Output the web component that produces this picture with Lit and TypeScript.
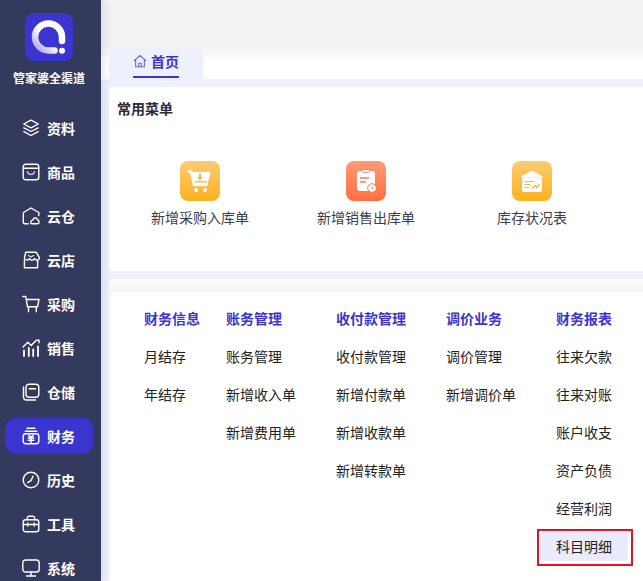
import { LitElement, html, css, svg } from "lit";
import { customElement } from "lit/decorators.js";

const navIcons: Record<string, unknown> = {
  资料: svg`<path d="M9 1.200 16.300 5 9 8.800 1.700 5Z"/><path d="M1.900 8.800 9 12.500l7.100-3.700"/><path d="M1.900 12.600 9 16.500l7.100-3.900"/>`,
  商品: svg`<rect x="1.200" y="1.200" width="15.600" height="15.600" rx="2.500"/><path d="M1.500 5.200h15"/><path d="M5.500 8.800c.7 3.400 6.300 3.400 7 0" stroke="#e0b8ec"/>`,
  云仓: svg`<path d="M16.800 8.500V5.500L9 1 1.400 5.500l-.2 9.200c0 1.300.7 2.100 2 2.100h3"/><path d="M9.500 16.800h5.800c2.400-.2 2.400-3.600.2-3.900-.6-2.700-4.300-2.400-4.700.2-2.100-.2-2.700 3.500-1.300 3.700Z"/>`,
  云店: svg`<path d="M3.800 1.200h10.400l3.300 5.600c-.4 3-4 3-4.900.8-.8 2.200-4.500 2.200-5.200 0-.9 2.200-4.500 2.200-5-.8Z"/><path d="M2.400 9.500v7.300h13.200V9.500"/><path d="M6.500 4.500 9 6l2.500-1.500" stroke="#cfd3ea"/>`,
  采购: svg`<path d="M.8 1.500h3l1.700 10.300h10L17 4.500H4.300"/><path d="M6.500 11.800v5M14.300 11.800v5"/>`,
  销售: svg`<path d="M1 8 5.800 3.200l3.400 3.300L14 1.500"/><path d="M14.500 1.200h2.500v2.500"/><path d="M2 11.500v5.500M6.800 9v8M11.200 10.500v6.500M16 7.500v9.500" stroke-width="1.800"/>`,
  仓储: svg`<path d="M1.500 4v10c0 1.800 1.200 3 3 3h9"/><rect x="4" y="1.200" width="12.800" height="13" rx="3"/><path d="M7.300 5.800h6.200"/>`,
  财务: svg`<path d="M5 1.300h8M3.300 4.200h11.400"/><rect x="1.200" y="6.800" width="15.600" height="10" rx="2.500"/><path d="M6.800 8.300 9 10.400l2.200-2.100M6.300 11h5.400M6.300 13.200h5.400M9 10.500v4.800" stroke-width="1.600"/>`,
  历史: svg`<circle cx="9" cy="9" r="7.800"/><path d="M11 5.200 9 9.600l-3.400 2"/>`,
  工具: svg`<path d="M5.300 4.800V3c0-1 .7-1.800 1.700-1.800h4c1 0 1.700.8 1.700 1.800v1.800"/><rect x="1.200" y="4.800" width="15.600" height="12" rx="2.500"/><path d="M1.500 9.500h15M5.800 8v3M12.200 8v3"/>`,
  系统: svg`<rect x=".8" y="1" width="16.400" height="12" rx="2.800"/><path d="M9 13v4M4.500 17h9"/>`,
};

const navItems = ["资料", "商品", "云仓", "云店", "采购", "销售", "仓储", "财务", "历史", "工具", "系统"];

const columns = [
  { title: "财务信息", items: ["月结存", "年结存"] },
  { title: "账务管理", items: ["账务管理", "新增收入单", "新增费用单"] },
  { title: "收付款管理", items: ["收付款管理", "新增付款单", "新增收款单", "新增转款单"] },
  { title: "调价业务", items: ["调价管理", "新增调价单"] },
  { title: "财务报表", items: ["往来欠款", "往来对账", "账户收支", "资产负债", "经营利润", "科目明细"] },
];

const cartIcon = svg`
  <path d="M8.500 10.500h2.500l3 13.500h12.500" fill="none" stroke="#fff" stroke-width="2.400" stroke-linejoin="round" stroke-linecap="round"/>
  <path d="M11.500 11h19l-3 13H14Z" fill="#fff"/>
  <path d="M20 12.500v4.500" stroke="#fbb62f" stroke-width="1.800"/>
  <path d="M17 16h6l-3 3.200Z" fill="#fbb62f"/>
  <path d="M15 20.800h12" stroke="#fbb62f" stroke-width="1.200"/>
  <circle cx="16" cy="29" r="2" fill="#fff"/><circle cx="25" cy="29" r="2" fill="#fff"/>`;

const clipIcon = svg`
  <rect x="11" y="10" width="18" height="20" rx="2.500" fill="#fff"/>
  <rect x="16" y="8.500" width="8" height="3" rx="1.500" fill="#fff" stroke="#ff7a50" stroke-width=".8"/>
  <path d="M14 17h9M14 21h6" stroke="#ff7a50" stroke-width="1.400"/>
  <circle cx="26" cy="27" r="4.300" fill="#fff" stroke="#ff7a50" stroke-width="1"/>
  <path d="M26 25v2.200l1.600 1" fill="none" stroke="#ff7a50" stroke-width=".9"/>`;

const reportIcon = svg`
  <path d="M20 10.500 10 16h20Z" fill="#fff" stroke="#fff" stroke-width="1.500" stroke-linejoin="round"/>
  <rect x="10" y="17" width="20" height="14" rx="2" fill="#fff"/>
  <path d="M12.500 20.500h10M12.500 23.500h6M12.500 26.500h4.500" stroke="#fbb62f" stroke-width="1.100"/>
  <path d="M20 27.500l3-3 1.500 2 3-3.500" fill="none" stroke="#fbb62f" stroke-width="1.200"/>`;

const quick = [
  { label: "新增采购入库单", tone: "amber", icon: cartIcon },
  { label: "新增销售出库单", tone: "coral", icon: clipIcon },
  { label: "库存状况表", tone: "amber", icon: reportIcon },
];

@customElement("app-root")
export class AppRoot extends LitElement {
  static styles = css`
    :host {
      display: flex;
      width: 643px;
      height: 581px;
      overflow: hidden;
      position: relative;
      font-family: "Noto Sans CJK SC", "Liberation Sans", sans-serif;
      background: #eef0fc;
    }

    .side {
      flex: 0 0 101px;
      background: #343a5e;
      display: flex;
      flex-direction: column;
      align-items: center;
      padding: 13px 3px 0 0;
      box-sizing: border-box;
      box-shadow: 3px 0 8px rgba(52, 58, 94, 0.12);
      z-index: 1;
    }
    .logo {
      width: 48px;
      height: 48px;
      border-radius: 9px;
      background: #3b35cf;
      display: block;
      flex: none;
    }
    .brand {
      margin: 8px 0 23px;
      color: #fff;
      font-size: 12px;
      font-weight: 700;
      line-height: 18px;
      white-space: nowrap;
    }
    .nav {
      align-self: stretch;
      padding: 0 5px;
      display: flex;
      flex-direction: column;
      gap: 8px;
    }
    .nav-item {
      height: 36px;
      flex: none;
      border-radius: 11px;
      display: flex;
      align-items: center;
      padding-left: 17px;
      gap: 7px;
      color: #fff;
      font-size: 14px;
      font-weight: 700;
    }
    .nav-item.on {
      background: #3b35cf;
    }
    .nav-item svg {
      width: 18px;
      height: 18px;
      fill: none;
      stroke: #fff;
      stroke-width: 1.400;
      stroke-linejoin: round;
      stroke-linecap: round;
      flex: none;
    }

    .main {
      flex: 1;
      min-width: 0;
      display: flex;
      flex-direction: column;
    }
    .top {
      height: 47px;
      background: #f2f2f3;
      flex: none;
    }
    .tabs {
      height: 32px;
      flex: none;
      padding-left: 8px;
      background: linear-gradient(#f2f2f3, #fff 14px);
    }
    .tab {
      width: 94px;
      height: 32px;
      box-sizing: border-box;
      background: #eef0fc;
      border-radius: 8px 8px 0 0;
      display: flex;
      justify-content: center;
    }
    .tab-in {
      height: 31px;
      box-sizing: border-box;
      width: 46px;
      padding-top: 4px;
      border-bottom: 2px solid #3b35cf;
      display: flex;
      align-items: flex-start;
      gap: 4px;
      color: #3b35cf;
      font-size: 14px;
      font-weight: 700;
      line-height: 20px;
      white-space: nowrap;
    }
    .tab-in svg {
      width: 14px;
      height: 14px;
      margin-top: 3px;
      flex: none;
      fill: none;
      stroke: #6a66d8;
      stroke-width: 1.200;
      stroke-linejoin: round;
    }
    .body {
      flex: 1;
      padding: 8px 0 0 8px;
      display: flex;
      flex-direction: column;
      gap: 8px;
    }
    .card {
      background: #fff;
      border-radius: 4px 0 0 4px;
      height: 184px;
      flex: none;
      box-sizing: border-box;
      padding: 12px 8px;
    }
    .card h2 {
      margin: 0;
      font-size: 14px;
      font-weight: 700;
      line-height: 18px;
      color: #2a2a3a;
    }
    .quick {
      display: grid;
      grid-template-columns: repeat(3, 166px);
      margin-top: 44px;
    }
    .quick-item {
      display: flex;
      flex-direction: column;
      align-items: center;
      width: 166px;
      gap: 6px;
      font-size: 14px;
      line-height: 20px;
      color: #3c3c50;
      white-space: nowrap;
    }
    .quick-icon {
      width: 40px;
      height: 40px;
      border-radius: 8px;
      display: block;
    }
    .amber {
      background: linear-gradient(#fdcb72, #fbb21f);
    }
    .coral {
      background: linear-gradient(#ff9a72, #ff6f42);
    }
    .panel {
      flex: 1;
      background: linear-gradient(#fdfdfd, #f5f5f6 13px, #fbfbfc 13px);
      border-radius: 4px 0 0 0;
      padding: 13px 0 0 3px;
    }
    .panel-in {
      background: #fff;
      display: flex;
      padding: 7px 0 0 32px;
      height: 100%;
      box-sizing: border-box;
    }
    .col {
      flex: 0 0 110px;
      font-size: 14px;
      color: #222;
    }
    .col.first {
      flex-basis: 82px;
    }
    .col h3 {
      margin: 0;
      height: 38px;
      line-height: 38px;
      font-size: 14px;
      font-weight: 700;
      color: #3b35cf;
      white-space: nowrap;
    }
    .col div {
      height: 38px;
      line-height: 38px;
      white-space: nowrap;
    }
    .col div.hit {
      position: relative;
    }
    .col div.hit::before {
      content: "";
      position: absolute;
      left: -16px;
      width: 88px;
      top: 5px;
      height: 29px;
      background: #ebebfb;
      border-radius: 3px;
    }
    .col div.hit span {
      position: relative;
    }
    .mark {
      position: absolute;
      left: 537px;
      top: 529px;
      width: 96px;
      height: 37px;
      box-sizing: border-box;
      border: 2px solid #e81123;
      pointer-events: none;
    }
  `;

  render() {
    return html`
      <aside class="side">
        <svg class="logo" viewBox="0 0 48 48">
          <defs>
            <linearGradient id="ring" x1="0" y1="1" x2="1" y2="0">
              <stop offset="0" stop-color="#a09de9" />
              <stop offset=".45" stop-color="#fff" />
            </linearGradient>
          </defs>
          <path d="M37 28V24a13.500 13.500 0 1 0-13.500 13.500h6" fill="none" stroke="url(#ring)" stroke-width="6.500" stroke-linecap="round" />
          <circle cx="37" cy="37.700" r="3" fill="#fff" />
        </svg>
        <div class="brand">管家婆全渠道</div>
        <nav class="nav">
          ${navItems.map(
            (n) => html`<div class="nav-item ${n === "财务" ? "on" : ""}">
              <svg viewBox="0 0 18 18">${navIcons[n]}</svg>${n}
            </div>`
          )}
        </nav>
      </aside>
      <section class="main">
        <div class="top"></div>
        <div class="tabs">
          <div class="tab">
            <div class="tab-in">
              <svg viewBox="0 0 16 16"><path d="M1 8 8 1.500 15 8M3 6.500V14.500h10V6.500M6.500 14.500v-4h3v4" /></svg>首页
            </div>
          </div>
        </div>
        <div class="body">
          <div class="card">
            <h2>常用菜单</h2>
            <div class="quick">
              ${quick.map(
                (q) => html`<div class="quick-item">
                  <svg class="quick-icon ${q.tone}" viewBox="0 0 40 40">${q.icon}</svg>
                  ${q.label}
                </div>`
              )}
            </div>
          </div>
          <div class="panel">
            <div class="panel-in">
              ${columns.map(
                (c, i) => html`<div class="col ${i === 0 ? "first" : ""}">
                  <h3>${c.title}</h3>
                  ${c.items.map(
                    (t) => html`<div class="${t === "科目明细" ? "hit" : ""}"><span>${t}</span></div>`
                  )}
                </div>`
              )}
            </div>
          </div>
        </div>
      </section>
      <div class="mark"></div>
    `;
  }
}
